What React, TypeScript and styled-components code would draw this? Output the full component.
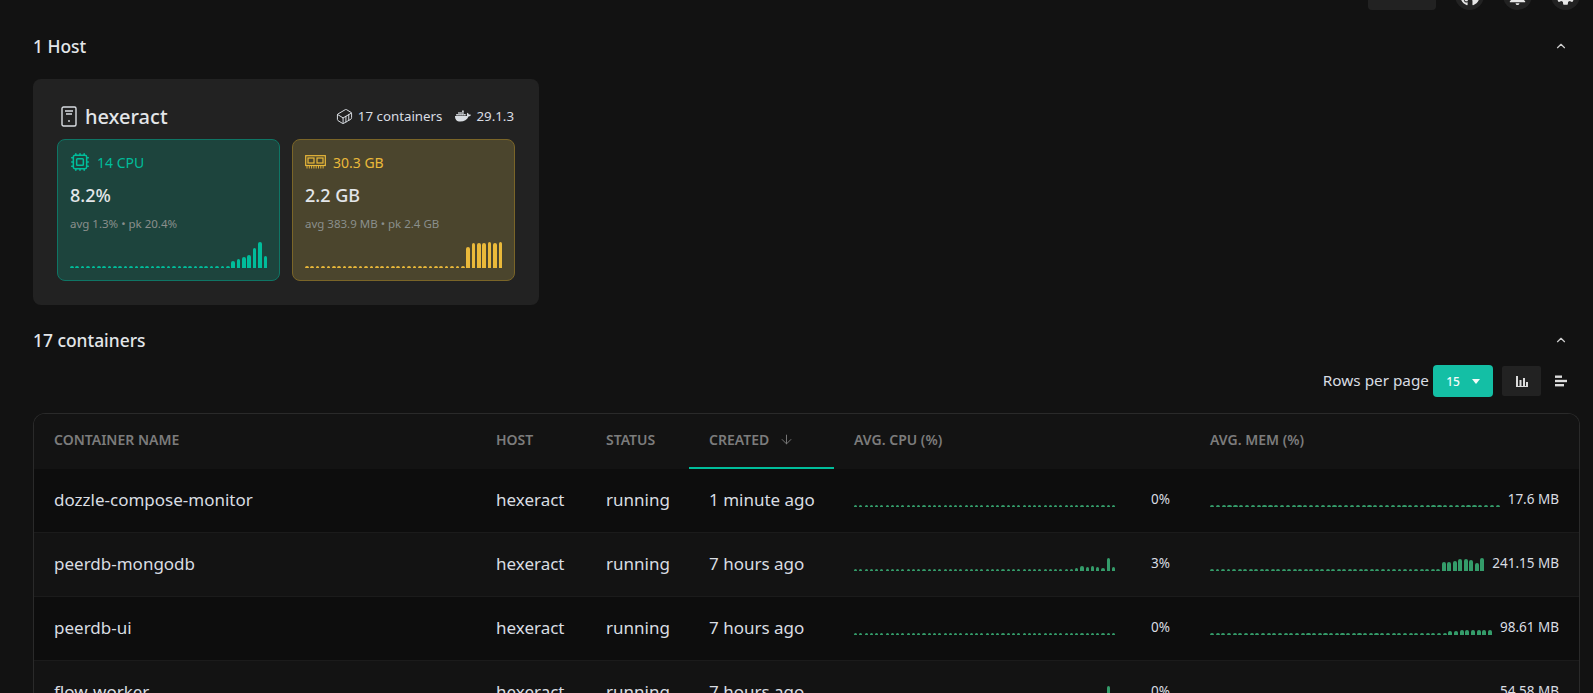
import styled, { createGlobalStyle } from "styled-components";
import { ChevronUp, ArrowDown, Container, Cpu } from "lucide-react";
import { FaDocker, FaGithub } from "react-icons/fa";
import { MdNotifications, MdSettings } from "react-icons/md";

type Row = {
  name: string;
  created: string;
  cpu: string;
  mem: string;
  cpuTail: number[];
  memTail: number[];
};

const rows: Row[] = [
  { name: "dozzle-compose-monitor", created: "1 minute ago", cpu: "0%", mem: "17.6 MB", cpuTail: [], memTail: [] },
  {
    name: "peerdb-mongodb",
    created: "7 hours ago",
    cpu: "3%",
    mem: "241.15 MB",
    cpuTail: [3, 5.5, 4, 5, 4, 3, 13, 4],
    memTail: [9, 9, 10, 12.5, 12.5, 11, 8, 13],
  },
  {
    name: "peerdb-ui",
    created: "7 hours ago",
    cpu: "0%",
    mem: "98.61 MB",
    cpuTail: [],
    memTail: [4, 4.5, 5, 5, 5, 5, 5, 5],
  },
  { name: "flow-worker", created: "7 hours ago", cpu: "0%", mem: "54.58 MB", cpuTail: [13, 2], memTail: [] },
];

const GlobalStyle = createGlobalStyle`
  html, body {
    margin: 0;
    height: 693px;
    overflow: hidden;
    background: #121212;
    color: #d9dde2;
    font-family: "Noto Sans", "Liberation Sans", sans-serif;
  }
`;

const Page = styled.div`
  padding: 0 13px 0 33px;
  margin-top: -19px;
`;

const TopBar = styled.div`
  display: flex;
  justify-content: flex-end;
  align-items: stretch;
  height: 29px;
  gap: 19px;
`;

const TopButton = styled.div`
  width: 68px;
  background: #222222;
  border-radius: 4px;
`;

const RoundButton = styled.div`
  width: 29px;
  height: 29px;
  border-radius: 50%;
  background: #222222;
  color: #e6e6e6;
  display: flex;
  align-items: center;
  justify-content: center;
`;

const SectionHead = styled.div<{ $top: number }>`
  display: flex;
  align-items: center;
  justify-content: space-between;
  box-sizing: border-box;
  height: 24px;
  margin-top: ${(p) => p.$top}px;
  padding: 0 12px 2px 0;
  font-size: 17.4px;
  font-weight: 500;
  color: #e3e6e9;
`;

const HostCard = styled.section`
  width: 506px;
  box-sizing: border-box;
  margin-top: 20px;
  padding: 24px 25px 24px 24px;
  background: #222222;
  border-radius: 8px;
`;

const HostHead = styled.div`
  display: flex;
  align-items: center;
  justify-content: space-between;
  height: 26px;
  margin-bottom: 10px;
`;

const HostName = styled.div`
  display: flex;
  align-items: center;
  gap: 8px;
  padding-left: 4px;
  font-size: 20px;
  font-weight: 500;
  color: #e3e6e9;
`;

const HostMeta = styled.div`
  display: flex;
  align-items: center;
  font-size: 13.3px;
  color: #d9dde2;
`;

const MetaItem = styled.span`
  display: flex;
  align-items: center;
  gap: 5px;
  margin-left: 13px;
`;

const Metrics = styled.div`
  display: grid;
  grid-template-columns: 223px 223px;
  gap: 12px;
`;

const Metric = styled.div<{ $color: string; $bg: string; $border: string }>`
  height: 142px;
  box-sizing: border-box;
  padding: 12px;
  border: 1px solid ${(p) => p.$border};
  border-radius: 8px;
  background: ${(p) => p.$bg};
  --accent: ${(p) => p.$color};
`;

const MetricHead = styled.div`
  display: flex;
  align-items: center;
  gap: 7px;
  height: 20px;
  font-size: 14px;
  color: var(--accent);
`;

const MetricValue = styled.div`
  margin-top: 9px;
  height: 28px;
  line-height: 28px;
  font-size: 18px;
  font-weight: 500;
  color: #e3e6e9;
`;

const MetricSub = styled.div`
  margin-top: 7px;
  height: 16px;
  line-height: 16px;
  font-size: 11.5px;
  color: #8a8f8c;
`;

const Spark = styled.div<{ $height: number; $gap: number }>`
  display: flex;
  align-items: flex-end;
  gap: ${(p) => p.$gap}px;
  height: ${(p) => p.$height}px;
  flex: 1;
  min-width: 0;
`;

const Bar = styled.i<{ $color: string }>`
  flex: 1;
  min-width: 0;
  background: ${(p) => p.$color};
  border-radius: 2px 2px 0 0;
`;

const MetricSpark = styled(Spark)`
  margin-top: 10px;
  flex: none;
`;

const Toolbar = styled.div`
  display: flex;
  align-items: center;
  justify-content: flex-end;
  height: 32px;
  margin-top: 12px;
  font-size: 15.3px;
  color: #d9dde2;
`;

const ToolbarLabel = styled.span`
  padding-bottom: 3px;
`;

const PageSelect = styled.div`
  display: flex;
  align-items: center;
  justify-content: center;
  gap: 12px;
  width: 60px;
  height: 32px;
  margin-left: 4px;
  border-radius: 4px;
  background: #14bfa5;
  color: #f3fbf9;
  font-size: 12px;
  font-weight: 500;
`;

const Caret = styled.span`
  width: 0;
  height: 0;
  border-left: 4px solid transparent;
  border-right: 4px solid transparent;
  border-top: 5px solid #f3fbf9;
`;

const ToggleGroup = styled.div`
  display: flex;
  margin-left: 9px;
`;

const Toggle = styled.div<{ $active?: boolean }>`
  display: flex;
  align-items: center;
  justify-content: center;
  width: 39px;
  height: 30px;
  background: ${(p) => (p.$active ? "#222222" : "transparent")};
  border-radius: 2px;
  color: #dcdcdc;
`;

const Table = styled.div`
  margin-top: 16px;
  border: 1px solid #2a2a2a;
  border-bottom: 0;
  border-radius: 12px 12px 0 0;
  overflow: hidden;
`;

const Grid = styled.div`
  display: grid;
  grid-template-columns: 442px 110px 103px 145px 356px 1fr;
`;

const Head = styled(Grid)`
  height: 55px;
  background: #131313;
`;

const HeadCell = styled.div<{ $active?: boolean }>`
  display: flex;
  align-items: center;
  gap: 10px;
  padding: 0 20px 2px;
  box-sizing: border-box;
  font-size: 14px;
  font-weight: 600;
  text-transform: uppercase;
  color: #7c7c7c;
  border-bottom: 2px solid ${(p) => (p.$active ? "#00bd9b" : "transparent")};
`;

const BodyRow = styled(Grid)<{ $odd: boolean }>`
  height: 64px;
  box-sizing: border-box;
  border-bottom: 1px solid #1b1b1b;
  background: ${(p) => (p.$odd ? "#0d0d0d" : "#131313")};
`;

const Cell = styled.div`
  display: flex;
  align-items: center;
  padding: 0 20px 3px;
  box-sizing: border-box;
  font-size: 17px;
  color: #d9dde2;
  white-space: nowrap;
`;

const StatCell = styled(Cell)`
  gap: 8px;
  font-size: 13.5px;
`;

const Percent = styled.span`
  width: 47px;
  text-align: right;
`;

function sparkValues(count: number, tail: number[], base: number) {
  const values: number[] = new Array(count - tail.length).fill(base);
  return values.concat(tail);
}

function Sparkline({ tail, color, height, gap, count = 50, base = 1.8 }: {
  tail: number[];
  color: string;
  height: number;
  gap: number;
  count?: number;
  base?: number;
}) {
  const Wrap = height > 20 ? MetricSpark : Spark;
  return (
    <Wrap $height={height} $gap={gap}>
      {sparkValues(count, tail, base).map((v, i) => (
        <Bar key={i} $color={color} style={{ height: v }} />
      ))}
    </Wrap>
  );
}

function ServerIcon() {
  return (
    <svg width="16" height="21" viewBox="0 0 16 21" fill="none" stroke="#d9dde2" strokeWidth="1.4">
      <rect x="1" y="1" width="14" height="19" rx="1.5" />
      <path d="M4 5h8M5 8h6" />
      <circle cx="8" cy="15" r="0.9" fill="#d9dde2" stroke="none" />
    </svg>
  );
}

function MemoryIcon() {
  return (
    <svg width="21" height="14" viewBox="0 0 21 14" fill="none" stroke="currentColor" strokeWidth="1.2">
      <rect x="0.7" y="0.7" width="19.6" height="9.8" />
      <rect x="3" y="3" width="6" height="5" />
      <rect x="12" y="3" width="6" height="5" />
      <path d="M2 10.5v3M4.3 10.5v3M6.6 10.5v3M8.9 10.5v3M11.2 10.5v3M13.5 10.5v3M15.8 10.5v3M18.1 10.5v3" strokeWidth="0.9" />
    </svg>
  );
}

function BarsIcon() {
  return (
    <svg width="14" height="14" viewBox="0 0 14 14" fill="currentColor">
      <rect x="1" y="2" width="2" height="10" />
      <rect x="4.5" y="6" width="2" height="6" />
      <rect x="8" y="4" width="2" height="8" />
      <rect x="11" y="8" width="2" height="4" />
      <rect x="1" y="12" width="12" height="1" />
    </svg>
  );
}

function SortBarsIcon() {
  return (
    <svg width="14" height="14" viewBox="0 0 14 14" fill="currentColor">
      <rect x="1" y="1.5" width="7" height="2.4" />
      <rect x="1" y="5.8" width="12" height="2.4" />
      <rect x="1" y="10" width="9" height="2.4" />
    </svg>
  );
}

export default function App() {
  return (
    <>
      <GlobalStyle />
      <Page>
        <TopBar>
          <TopButton />
          <RoundButton>
            <FaGithub size={20} />
          </RoundButton>
          <RoundButton>
            <MdNotifications size={23} />
          </RoundButton>
          <RoundButton>
            <MdSettings size={23} />
          </RoundButton>
        </TopBar>

        <SectionHead $top={25}>
          1 Host
          <ChevronUp size={14} color="#cfcfcf" />
        </SectionHead>

        <HostCard>
          <HostHead>
            <HostName>
              <ServerIcon />
              hexeract
            </HostName>
            <HostMeta>
              <MetaItem>
                <Container size={17} strokeWidth={1.4} />
                17 containers
              </MetaItem>
              <MetaItem>
                <FaDocker size={16} />
                29.1.3
              </MetaItem>
            </HostMeta>
          </HostHead>
          <Metrics>
            <Metric $color="#00bd9b" $bg="#1d443d" $border="#0f7565">
              <MetricHead>
                <Cpu size={20} strokeWidth={1.8} />
                14 CPU
              </MetricHead>
              <MetricValue>8.2%</MetricValue>
              <MetricSub>avg 1.3% • pk 20.4%</MetricSub>
              <Sparkline
                tail={[7, 9.5, 11, 13, 20, 26, 12]}
                color="#00bd9b"
                height={26}
                gap={1.7}
                count={37}
              />
            </Metric>
            <Metric $color="#eab93a" $bg="#4b452d" $border="#7a6528">
              <MetricHead>
                <MemoryIcon />
                30.3 GB
              </MetricHead>
              <MetricValue>2.2 GB</MetricValue>
              <MetricSub>avg 383.9 MB • pk 2.4 GB</MetricSub>
              <Sparkline
                tail={[21, 25, 25, 25, 26, 25, 26]}
                color="#eab93a"
                height={26}
                gap={1.7}
                count={37}
              />
            </Metric>
          </Metrics>
        </HostCard>

        <SectionHead $top={24}>
          17 containers
          <ChevronUp size={14} color="#cfcfcf" />
        </SectionHead>

        <Toolbar>
          <ToolbarLabel>Rows per page</ToolbarLabel>
          <PageSelect>
            15
            <Caret />
          </PageSelect>
          <ToggleGroup>
            <Toggle $active>
              <BarsIcon />
            </Toggle>
            <Toggle>
              <SortBarsIcon />
            </Toggle>
          </ToggleGroup>
        </Toolbar>

        <Table>
          <Head>
            <HeadCell>Container name</HeadCell>
            <HeadCell>Host</HeadCell>
            <HeadCell>Status</HeadCell>
            <HeadCell $active>
              Created
              <ArrowDown size={15} strokeWidth={1.5} />
            </HeadCell>
            <HeadCell>Avg. CPU (%)</HeadCell>
            <HeadCell>Avg. MEM (%)</HeadCell>
          </Head>
          {rows.map((row, i) => (
            <BodyRow key={row.name} $odd={i % 2 === 0}>
              <Cell>{row.name}</Cell>
              <Cell>hexeract</Cell>
              <Cell>running</Cell>
              <Cell>{row.created}</Cell>
              <StatCell>
                <Sparkline tail={row.cpuTail} color="#349c6a" height={16} gap={2.2} />
                <Percent>{row.cpu}</Percent>
              </StatCell>
              <StatCell>
                <Sparkline tail={row.memTail} color="#349c6a" height={16} gap={1.6} />
                {row.mem}
              </StatCell>
            </BodyRow>
          ))}
        </Table>
      </Page>
    </>
  );
}
